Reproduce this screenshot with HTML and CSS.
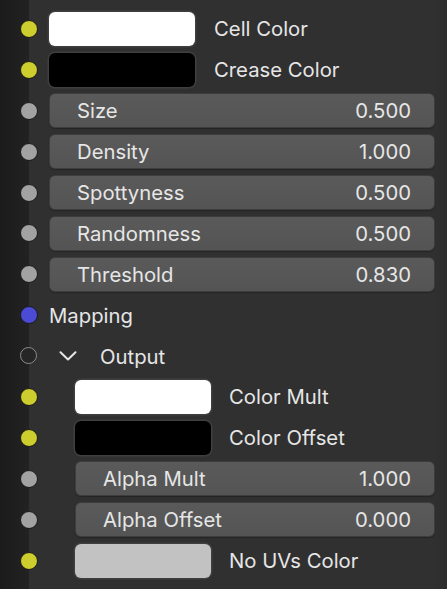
FILE: index.html
```html
<!DOCTYPE html>
<html>
<head>
<meta charset="utf-8">
<link rel="stylesheet" href="styles.css">
</head>
<body>
<div class="node">
  <div class="row">
    <span class="socket yellow"></span>
    <div class="swatch white"></div><span class="label">Cell Color</span>
  </div>
  <div class="row">
    <span class="socket yellow"></span>
    <div class="swatch black"></div><span class="label">Crease Color</span>
  </div>
  <div class="row">
    <span class="socket grey"></span>
    <div class="field"><span>Size</span><span>0.500</span></div>
  </div>
  <div class="row">
    <span class="socket grey"></span>
    <div class="field"><span>Density</span><span>1.000</span></div>
  </div>
  <div class="row">
    <span class="socket grey"></span>
    <div class="field"><span>Spottyness</span><span>0.500</span></div>
  </div>
  <div class="row">
    <span class="socket grey"></span>
    <div class="field"><span>Randomness</span><span>0.500</span></div>
  </div>
  <div class="row">
    <span class="socket grey"></span>
    <div class="field"><span>Threshold</span><span>0.830</span></div>
  </div>
  <div class="row">
    <span class="socket blue"></span>
    <span class="plain">Mapping</span>
  </div>
  <div class="row panel-head">
    <span class="socket hollow"></span>
    <svg class="chevron" width="18" height="10" viewBox="0 0 18 10"><polyline points="1.5,1.2 9,8.5 16.5,1.2" fill="none" stroke="#e6e6e6" stroke-width="2" stroke-linecap="round" stroke-linejoin="round"/></svg>
    <span class="plain">Output</span>
  </div>
  <div class="row sub">
    <span class="socket yellow"></span>
    <div class="swatch white"></div><span class="label">Color Mult</span>
  </div>
  <div class="row sub">
    <span class="socket yellow"></span>
    <div class="swatch black"></div><span class="label">Color Offset</span>
  </div>
  <div class="row sub">
    <span class="socket grey"></span>
    <div class="field"><span>Alpha Mult</span><span>1.000</span></div>
  </div>
  <div class="row sub">
    <span class="socket grey"></span>
    <div class="field"><span>Alpha Offset</span><span>0.000</span></div>
  </div>
  <div class="row sub">
    <span class="socket yellow"></span>
    <div class="swatch light"></div><span class="label">No UVs Color</span>
  </div>
</div>
</body>
</html>
```

FILE: styles.css
```css
html, body {
  margin: 0;
  padding: 0;
  height: 100%;
}
body {
  background: linear-gradient(to right, #1b1b1b 0, #222222 29px);
  font-family: Inter, "Noto Sans", "DejaVu Sans", sans-serif;
  font-size: 20.3px;
  color: #e6e6e6;
  overflow: hidden;
}
.node {
  margin-left: 29px;
  height: 100%;
  box-sizing: border-box;
  background: linear-gradient(to right, #303030 0, #303030 405px, #2c2c2c 418px);
  padding: 8.5px 12px 0 20px;
}
.row {
  position: relative;
  height: 40.9px;
  display: flex;
  align-items: center;
}
.row.sub {
  padding-left: 26px;
}
.socket {
  position: absolute;
  left: -29px;
  top: 50%;
  width: 16px;
  height: 16px;
  margin-top: -9px;
  border-radius: 50%;
  border: 1px solid #1a1a1a;
}
.socket.yellow { background: #cdcd2d; }
.socket.grey { background: #a2a2a2; }
.socket.blue { background: #4b4bd6; }
.socket.hollow {
  background: #262626;
  border: 1.5px solid #8c8c8c;
  width: 15px;
  height: 15px;
}
.swatch {
  width: 146px;
  height: 34px;
  box-sizing: border-box;
  border-radius: 6px;
  box-shadow: 0 0 0 1.5px #3f3f3f;
  flex: none;
}
.row.sub .swatch {
  width: 136px;
}
.swatch.white { background: #ffffff; }
.swatch.black { background: #000000; }
.swatch.light { background: #c2c2c2; }
.label {
  margin-left: 19px;
  white-space: nowrap;
}
.row.sub .label {
  margin-left: 18px;
}
.field {
  flex: 1;
  height: 35px;
  box-sizing: border-box;
  border-radius: 6px;
  background: linear-gradient(to bottom, #5a5a5a 0, #545454 100%);
  border: 1px solid #3d3d3d;
  box-shadow: 0 1px 1px #252525;
  display: flex;
  align-items: center;
  justify-content: space-between;
  padding: 0 23px 0 27px;
  white-space: nowrap;
}
.plain {
  white-space: nowrap;
}
.panel-head .chevron {
  margin-left: 10px;
  margin-right: 23px;
  flex: none;
}
```
